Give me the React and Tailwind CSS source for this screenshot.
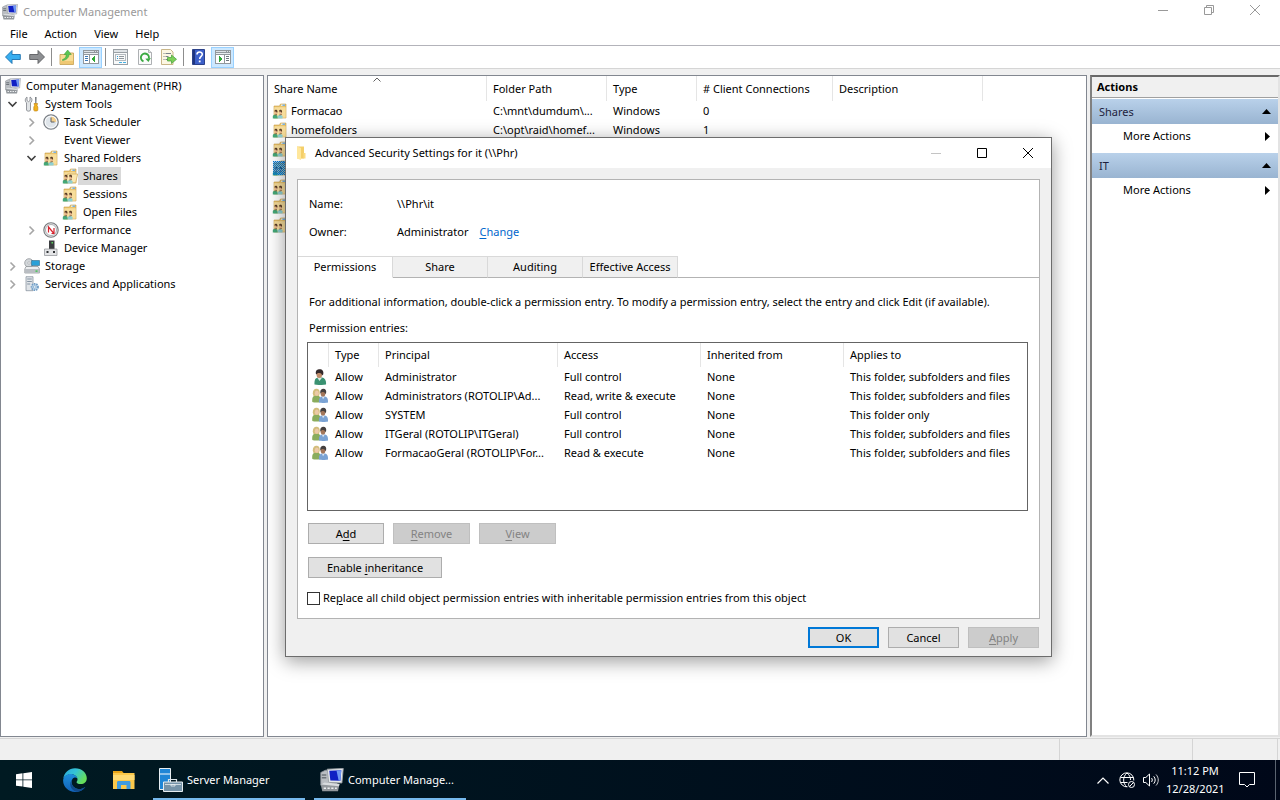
import React from 'react'

/* ---------- icons ---------- */

const ComputerIcon = ({ className = 'w-4 h-4' }) => (
  <svg className={className} viewBox="0 0 16 16">
    <path d="M.5 3l3-1.5h3V11l-4 1.5-2-1z" fill="#b9bdc2" stroke="#8a8f95" strokeWidth=".5" />
    <path d="M1.2 4.2h3v1h-3zM1.2 6h3v1h-3z" fill="#6e747b" />
    <path d="M4.8.8L15.5.3 14.6 10l-8.8-.4z" fill="#e4e7ea" stroke="#9ba0a6" strokeWidth=".6" />
    <path d="M6.2 1.9l8-.4-.6 7-6.7-.2z" fill="#1020c4" />
    <path d="M11 1.7l3.2-.2-.6 7-1.2-.1z" fill="#6f97f2" />
    <path d="M8.5 9.8h3V11h-3z" fill="#9aa0a6" />
    <path d="M.5 11L3 9.5l10 1.2-1 4.8H1.5z" fill="#92979c" />
    <path d="M.5 11L3 9.5l10 1.2-.4 1.5z" fill="#d8dbde" />
    <path d="M2.5 13H4v1H2.500zM5 13h1.500v1H5zM7.500 13H9v1H7.500zM10 13h1.200v1H10z" fill="#eceef0" />
  </svg>
)

const ToolsIcon = () => (
  <svg className="w-4 h-4" viewBox="0 0 16 16">
    <path d="M3 1v3.5l1.500 1.200L6 4.500V1c1.800 1 2.300 2.400 1.800 4-.3.9-.8 1.400-1.300 1.800V14c0 1.600-4 1.600-4 0V6.800C.8 5.800.8 2.500 3 1z" fill="#e1e4e6" stroke="#7d8288" strokeWidth=".8" />
    <path d="M11 1h1.600l-.2 6.500h-1.200z" fill="#7a7f84" />
    <path d="M10 7.500h3.600l-.6 2 .8 1.500v3.300c0 1-4 1-4 0V11l.8-1.500z" fill="#f2b21c" stroke="#b97a08" strokeWidth=".6" />
  </svg>
)

const ClockIcon = () => (
  <svg className="w-4 h-4" viewBox="0 0 16 16">
    <circle cx="8" cy="8" r="7.2" fill="#dfe5ea" stroke="#7c8187" strokeWidth="1.3" />
    <path d="M8 8V2.200a5.800 5.800 0 0 1 5.800 5.800z" fill="#f3cf8d" />
    <circle cx="8" cy="8" r="5.9" fill="none" stroke="#fff" strokeWidth=".9" />
    <path d="M8 3.500V8h3.500" fill="none" stroke="#5d6268" strokeWidth="1" />
  </svg>
)

const SharedFolderIcon = ({ open = false, selected = false }) => (
  <svg className="w-4 h-4 shrink-0" viewBox="0 0 16 16">
    <path d="M2 3h5.500l1-2H14v14H2z" fill="#e9c36c" stroke="#c9a04a" strokeWidth=".6" />
    <path d="M9 1.600h4v1.200H9z" fill="#eaf4fb" />
    <path d="M10.500 1.600H13v1.200h-2.500z" fill="#5aa4e6" />
    <path d="M2.300 4.200h11.400v10.500H2.300z" fill="#f7dd9b" />
    {open && <path d="M5.500 6h10.200l-2 8.700H4z" fill="#fbe7b0" stroke="#c9a04a" strokeWidth=".6" />}
    <path d="M.8 13c.8-1.800 3.700-1.800 4.700 0l.3 2.500H.8z" fill="#43a878" />
    <path d="M5.800 13.300c.8-1.600 3.700-1.600 4.700 0v2.200H5.800z" fill="#8fcfd0" />
    <ellipse cx="4" cy="9.500" rx="1.500" ry="2.100" fill="#e6b68c" />
    <ellipse cx="8.600" cy="9.500" rx="1.500" ry="2.100" fill="#e6b68c" />
    <path d="M2.300 8.500C2.500 6.300 5.500 6.300 5.500 8.500L5 10c-.3-1.100-1-1.500-2.700-1.500zM6.900 8.500c.2-2.200 3.200-2.200 3.200 0L9.600 10c-.3-1.100-1-1.500-2.700-1.500z" fill="#5a3d26" />
    <path d="M2.500 12l2.500-.5M7.300 12l2.500-.5" stroke="#7d5432" strokeWidth=".8" />
    {selected && (
      <>
        <defs>
          <pattern id="dither" width="2" height="2" patternUnits="userSpaceOnUse">
            <path d="M0 0h1v1H0zM1 1h1v1H1z" fill="#0078d7" />
          </pattern>
        </defs>
        <path d="M1 1h15v14H1z" fill="#0078d7" opacity=".3" />
        <path d="M1 1h15v14H1z" fill="url(#dither)" />
      </>
    )}
  </svg>
)

const PerformanceIcon = () => (
  <svg className="w-4 h-4" viewBox="0 0 16 16">
    <circle cx="8" cy="8" r="7.2" fill="#e9eaeb" stroke="#77797c" strokeWidth="1.1" />
    <circle cx="8" cy="8" r="5.5" fill="#fff" stroke="#8e9195" strokeWidth=".7" />
    <path d="M5.500 10.500V5l5 6M11 6v5.500H8.500" fill="none" stroke="#d6202b" strokeWidth="1.2" />
  </svg>
)

const DeviceIcon = () => (
  <svg className="w-4 h-4" viewBox="0 0 16 16">
    <path d="M6 .5h5.500V9H6z" fill="#3b3d40" />
    <path d="M8.500 2H10v1.500H8.500z" fill="#59d35b" />
    <path d="M1.500 9H14v6.500H1.500z" fill="#e3e4e6" stroke="#8c8f93" strokeWidth=".7" />
    <path d="M3.500 11h2v2h-2zM10 11h2v2h-2z" fill="#2f3134" />
  </svg>
)

const StorageIcon = () => (
  <svg className="w-4 h-4" viewBox="0 0 16 16">
    <circle cx="5" cy="5" r="4.3" fill="#d3d7da" stroke="#868b90" strokeWidth=".7" />
    <circle cx="5" cy="5" r="1.2" fill="#fff" stroke="#868b90" strokeWidth=".5" />
    <path d="M7.500 2.500h8v5h-8z" fill="#2aa0d8" stroke="#33698a" strokeWidth=".6" />
    <path d="M2 8.500h12l1.500 2.500v4H.8v-4z" fill="#eceef0" stroke="#85898e" strokeWidth=".7" />
    <path d="M1 11h14.500v4H1z" fill="#b9bdc2" />
    <path d="M11.500 12.500h2v1.200h-2z" fill="#2bc93a" />
  </svg>
)

const ServicesIcon = () => (
  <svg className="w-4 h-4" viewBox="0 0 16 16">
    <path d="M2 .7h7v14H2z" fill="#e0e4e8" stroke="#7f8b96" strokeWidth=".7" />
    <path d="M3.200 3h4.600M3.200 5.500h4.600M3.200 8h3" stroke="#8493a2" strokeWidth="1" />
    <circle cx="10.8" cy="11" r="3.2" fill="#c4dbee" stroke="#6f9cc4" strokeWidth="1.8" strokeDasharray="1.5 .8" />
    <circle cx="10.8" cy="11" r="1.3" fill="#fff" stroke="#6f9cc4" strokeWidth=".7" />
  </svg>
)

const UserIcon = () => (
  <svg className="w-4 h-4" viewBox="0 0 16 16">
    <path d="M2.500 15.500c-.3-4 .5-6.300 3-6.700l4.500-.3c2.800.4 4.500 3 4 7-3 .7-8.500.7-11.500 0z" fill="#3a9272" />
    <path d="M5.500 9l2 3 2.500-3.300z" fill="#d9ebe3" />
    <ellipse cx="7.3" cy="5.5" rx="2.8" ry="3.6" fill="#c08d6b" />
    <path d="M3.800 4.500C3.500 1 5.500.2 7.500.2c3 0 4.500 2 3.700 5.300L10 6.500c0-1.500-1-2.500-2.500-2.500-1.700-.2-2.700.5-3 1.500z" fill="#33292a" />
  </svg>
)

const GroupIcon = () => (
  <svg className="w-4 h-4" viewBox="0 0 16 16">
    <path d="M.3 14C0 9.500 1 8 3.200 7.800h3C8 8 8.800 10 8.300 14c-2 .7-6 .7-8 0z" fill="#8aac5c" />
    <path d="M.8 5.500C.6 2.500 2.300.8 4.300.8S8 2 7.700 5.500L7 8H1.500z" fill="#d3bd7c" />
    <ellipse cx="4.8" cy="5.2" rx="2" ry="2.6" fill="#eccaa8" />
    <path d="M7 14.500c-.5-4 .8-5.700 3-5.900h2.500c2.300.2 3.800 1.900 3.500 5.900-2 .6-7 .6-9 0z" fill="#7ba3d4" />
    <path d="M10 8.700l1 2.500 1.700-2.500z" fill="#dce8f5" />
    <ellipse cx="11" cy="5.500" rx="2.4" ry="3.1" fill="#a3765a" />
    <path d="M8.200 4.500C8.200 2 9.500.8 11.300.8c2.300 0 3.400 1.700 2.800 4.400l-1 .8c0-1.200-.8-2-2-2s-2 .3-2.200 1.500z" fill="#45403f" />
  </svg>
)

const ArrowIcon = ({ forward = false }) => (
  <svg className="w-4 h-4" viewBox="0 0 16 16">
    {forward ? (
      <path d="M15.500 8L9 1.500v4H.7v5H9v4z" fill="#8d8f92" stroke="#5c5e61" strokeWidth=".9" />
    ) : (
      <path d="M.5 8L7 1.500v4h8.300v5H7v4z" fill="#37aef0" stroke="#1b6fae" strokeWidth=".9" />
    )}
  </svg>
)

const UpFolderIcon = () => (
  <svg className="w-4 h-4" viewBox="0 0 16 16">
    <path d="M1 5.500h8.500l1-1.500h4v11.500H1z" fill="#f8dc94" stroke="#c59d4b" strokeWidth=".8" />
    <path d="M1.500 12h12.600v3H1.500z" fill="#efc873" />
    <path d="M3.500 10.500c2.700-1 3.700-2.500 3.700-5H5L8.700 1l3.600 4.500H10c0 3-2.500 5.500-6.500 6z" fill="#5cc552" stroke="#3a9936" strokeWidth=".5" />
  </svg>
)

const PaneIcon = ({ right = false }) => (
  <svg className="w-4 h-4" viewBox="0 0 16 16" shapeRendering="crispEdges">
    <path d="M0 1h16v14H0z" fill="#92989d" />
    <path d="M1 2h10v1H1zM12 2h1v1h-1zM14 2h1v1h-1z" fill="#dde2e6" />
    <path d="M1 4h14v1H1z" fill="#e9edf0" />
    {right ? (
      <>
        <path d="M1 6h8v8H1zM10 6h5v8h-5z" fill="#fff" />
        <path d="M4 7l4 3-4 3z" fill="#2fa836" />
        <path d="M11 7h3v1h-3zM11 9h3v1h-3zM11 11h3v1h-3z" fill="#6d7780" />
      </>
    ) : (
      <>
        <path d="M1 6h5v8H1zM7 6h8v8H7z" fill="#fff" />
        <path d="M12 7l-4 3 4 3z" fill="#2fa836" />
        <path d="M2 7h3v1H2zM2 9h3v1H2zM2 11h3v1H2z" fill="#3d78b5" />
      </>
    )}
  </svg>
)

const PropertiesIcon = () => (
  <svg className="w-4 h-4" viewBox="0 0 16 16" shapeRendering="crispEdges">
    <path d="M0 0h15v16H0z" fill="#9aa0a5" />
    <path d="M1 1h13v2H1z" fill="#dfe3e6" />
    <path d="M1 4h13v11H1z" fill="#f9fafa" />
    <path d="M2 5h11v7H2z" fill="#b4babf" />
    <path d="M3 6h9v5H3z" fill="#f9fafa" />
    <path d="M4 7h1v1H4zM4 9h1v1H4z" fill="#2f9bd8" />
    <path d="M6 7h5v1H6zM6 9h5v1H6z" fill="#8f969c" />
    <path d="M6 13h3v1H6zM10 13h3v1h-3z" fill="#45b0e2" />
  </svg>
)

const RefreshIcon = () => (
  <svg className="w-4 h-4" viewBox="0 0 16 16">
    <path d="M1.500.5h10l3 3v12h-13z" fill="#fbfbfb" stroke="#a4a7aa" strokeWidth=".9" />
    <path d="M11.500.5v3h3" fill="#e1e3e5" stroke="#a4a7aa" strokeWidth=".8" />
    <path d="M6.500 12.300A4 4 0 1 1 11.800 9.500" fill="none" stroke="#3aa941" strokeWidth="1.9" />
    <path d="M13.800 9l-2.300 4-3.200-3.200z" fill="#3aa941" />
  </svg>
)

const ExportIcon = () => (
  <svg className="w-4 h-4" viewBox="0 0 16 16">
    <path d="M.5.5h9L12 3v12.500H.5z" fill="#fdf7e3" stroke="#c3ae7c" strokeWidth=".9" />
    <path d="M2.500 4.500h1M4.500 4.500H10M2.500 7.500h1M4.500 7.500h3M2.500 10.500h1M4.500 10.500h3" stroke="#7a828a" strokeWidth="1" />
    <path d="M6.500 8.500h4V6l5 4.300-5 4.200V12h-4z" fill="#7dcf58" stroke="#3f9f38" strokeWidth=".7" />
  </svg>
)

const HelpIcon = () => (
  <svg className="w-4 h-4" viewBox="0 0 16 16">
    <path d="M1.500.5h12v15h-12z" fill="#3c5fc8" stroke="#1f357f" strokeWidth=".9" />
    <path d="M2 1h2v14H2z" fill="#1f357f" />
    <path d="M6 5.500C6 2.300 11.300 2.300 11.300 5.300c0 2-2.600 2.200-2.600 4.700" fill="none" stroke="#fff" strokeWidth="1.6" />
    <path d="M7.800 11.500h1.800v1.800H7.800z" fill="#fff" />
  </svg>
)

const Chevron = ({ open }) => (
  <svg className="w-3 h-3" viewBox="0 0 12 12" fill="none">
    {open ? (
      <path d="M1.500 4l4 4 4-4" stroke="#404040" strokeWidth="1.6" />
    ) : (
      <path d="M3.500 2.500l4 4-4 4" stroke="#a6a6a6" strokeWidth="1.6" />
    )}
  </svg>
)

const glyphs = {
  minimize: 'M0 5.5h10',
  maximize: 'M.5.5h9v9h-9z',
  restore: 'M.5 2.5h7v7h-7zM2.5 2.5v-2h7v7h-2',
  close: 'M0 0l10 10M10 0L0 10',
}

const CaptionButton = ({ type, className = '' }) => (
  <button aria-label={type} className={`w-[46px] h-full flex items-center justify-center ${className}`}>
    <svg className="w-[10px] h-[10px]" viewBox="0 0 10 10" fill="none" stroke="currentColor">
      <path d={glyphs[type]} />
    </svg>
  </button>
)

/* ---------- data ---------- */

const tree = [
  { label: 'Computer Management (PHR)', icon: <ComputerIcon />, root: true },
  { label: 'System Tools', icon: <ToolsIcon />, indent: 'pl-[6px]', open: true },
  { label: 'Task Scheduler', icon: <ClockIcon />, indent: 'pl-[25px]', open: false },
  { label: 'Event Viewer', icon: null, indent: 'pl-[25px]', open: false },
  { label: 'Shared Folders', icon: <SharedFolderIcon />, indent: 'pl-[25px]', open: true },
  { label: 'Shares', icon: <SharedFolderIcon open />, indent: 'pl-[44px]', selected: true },
  { label: 'Sessions', icon: <SharedFolderIcon />, indent: 'pl-[44px]' },
  { label: 'Open Files', icon: <SharedFolderIcon />, indent: 'pl-[44px]' },
  { label: 'Performance', icon: <PerformanceIcon />, indent: 'pl-[25px]', open: false },
  { label: 'Device Manager', icon: <DeviceIcon />, indent: 'pl-[25px]' },
  { label: 'Storage', icon: <StorageIcon />, indent: 'pl-[6px]', open: false },
  { label: 'Services and Applications', icon: <ServicesIcon />, indent: 'pl-[6px]', open: false },
]

const shares = [
  { name: 'Formacao', path: 'C:\\mnt\\dumdum\\...', type: 'Windows', clients: 0 },
  { name: 'homefolders', path: 'C:\\opt\\raid\\homef...', type: 'Windows', clients: 1 },
  {}, { selected: true }, {}, {}, {},
]

const entries = [
  { user: true, principal: 'Administrator', access: 'Full control', applies: 'This folder, subfolders and files' },
  { principal: 'Administrators (ROTOLIP\\Ad...', access: 'Read, write & execute', applies: 'This folder, subfolders and files' },
  { principal: 'SYSTEM', access: 'Full control', applies: 'This folder only' },
  { principal: 'ITGeral (ROTOLIP\\ITGeral)', access: 'Full control', applies: 'This folder, subfolders and files' },
  { principal: 'FormacaoGeral (ROTOLIP\\For...', access: 'Read & execute', applies: 'This folder, subfolders and files' },
]

/* ---------- main window ---------- */

const ToolButton = ({ label, active, children }) => (
  <button
    aria-label={label}
    className={`w-[23px] h-[21px] flex items-center justify-center ${
      active ? 'bg-[#cce8ff] border border-[#99d1ff]' : ''
    }`}
  >
    {children}
  </button>
)

const Separator = () => <div className="w-px h-[18px] mx-[2px] bg-[#8d8d8d]" />

function Toolbar() {
  return (
    <div className="h-[23px] pl-px flex items-center gap-px border-b border-[#d5d5d5]">
      <ToolButton label="Back"><ArrowIcon /></ToolButton>
      <ToolButton label="Forward"><ArrowIcon forward /></ToolButton>
      <Separator />
      <ToolButton label="Up"><UpFolderIcon /></ToolButton>
      <ToolButton label="Console tree" active><PaneIcon /></ToolButton>
      <Separator />
      <ToolButton label="Properties"><PropertiesIcon /></ToolButton>
      <ToolButton label="Refresh"><RefreshIcon /></ToolButton>
      <ToolButton label="Export list"><ExportIcon /></ToolButton>
      <Separator />
      <ToolButton label="Help"><HelpIcon /></ToolButton>
      <ToolButton label="Action pane" active><PaneIcon right /></ToolButton>
    </div>
  )
}

function Tree() {
  return (
    <ul className="w-[264px] shrink-0 bg-white border border-[#828790] pt-px">
      {tree.map(({ label, icon, indent, open, root, selected }) => (
        <li key={label} className={`h-[18px] flex items-center ${root ? 'pl-1' : indent}`}>
          {!root && (
            <span className="w-[17px] shrink-0">
              {open !== undefined && <Chevron open={open} />}
            </span>
          )}
          <span className="w-4 h-4 shrink-0">{icon}</span>
          <span className={`h-[18px] leading-[17px] pl-[5px] pr-[3px] ${selected ? 'bg-[#d9d9d9]' : ''}`}>
            {label}
          </span>
        </li>
      ))}
    </ul>
  )
}

const headCell = 'p-0 pl-[6px] font-normal text-left border-r border-[#e5e5e5]'

function ShareList() {
  return (
    <div className="flex-1 min-w-0 bg-white border border-[#828790]">
      <table className="w-full table-fixed border-separate border-spacing-0">
        <colgroup>
          <col className="w-[219px]" />
          <col className="w-[120px]" />
          <col className="w-[90px]" />
          <col className="w-[136px]" />
          <col className="w-[150px]" />
          <col />
        </colgroup>
        <thead>
          <tr className="h-[25px]">
            <th className={`${headCell} relative`}>
              Share Name
              <svg className="absolute top-px left-1/2 -translate-x-1/2 w-2 h-[5px]" viewBox="0 0 8 5" fill="none" stroke="#606060">
                <path d="M.5 4.500L4 1l3.500 3.500" />
              </svg>
            </th>
            <th className={headCell}>Folder Path</th>
            <th className={headCell}>Type</th>
            <th className={headCell}># Client Connections</th>
            <th className={headCell}>Description</th>
            <th />
          </tr>
        </thead>
        <tbody>
          {shares.map((s, i) => (
            <tr key={i} className="h-[19px]">
              <td className="p-0 pl-1">
                <div className="flex items-center gap-[3px]">
                  <SharedFolderIcon selected={s.selected} />
                  {s.name}
                </div>
              </td>
              <td className="p-0 pl-[6px] whitespace-nowrap">{s.path}</td>
              <td className="p-0 pl-[6px]">{s.type}</td>
              <td className="p-0 pl-[6px]">{s.clients}</td>
              <td />
              <td />
            </tr>
          ))}
        </tbody>
      </table>
    </div>
  )
}

const ActionGroup = ({ title }) => (
  <section className="mb-[5px]">
    <button className="w-full h-[25px] pl-[7px] pr-[7px] flex items-center justify-between bg-gradient-to-b from-[#b9d1ea] to-[#99b4d1] text-[#1e1e3c]">
      {title}
      <svg className="w-[9px] h-[5px]" viewBox="0 0 9 5"><path d="M0 5L4.500 0 9 5z" fill="#000" /></svg>
    </button>
    <button className="w-full h-6 pl-[31px] pr-2 flex items-center justify-between">
      More Actions
      <svg className="w-[5px] h-[9px]" viewBox="0 0 5 9"><path d="M0 0l5 4.500L0 9z" fill="#000" /></svg>
    </button>
  </section>
)

function ActionsPane() {
  return (
    <aside className="w-[190px] shrink-0 bg-white border-2 border-t-[#696969] border-l-[#808080] border-r-[#e3e3e3] border-b-[#e3e3e3]">
      <h2 className="h-[21px] mb-px pl-[5px] flex items-center font-bold bg-[#f0f0f0] border-b border-[#a0a0a0]">Actions</h2>
      <ActionGroup title="Shares" />
      <ActionGroup title="IT" />
    </aside>
  )
}

/* ---------- dialog ---------- */

const DialogButton = ({ children, className = '', disabled, primary }) => (
  <button
    disabled={disabled}
    className={`h-[21px] flex items-center justify-center ${
      disabled
        ? 'bg-[#cccccc] border border-[#bfbfbf] text-[#838383]'
        : primary
          ? 'bg-[#e1e1e1] border-2 border-[#0078d7]'
          : 'bg-[#e1e1e1] border border-[#adadad]'
    } ${className}`}
  >
    <span>{children}</span>
  </button>
)

const Key = ({ children }) => <span className="underline underline-offset-2">{children}</span>

function SecurityDialog() {
  return (
    <div
      role="dialog"
      className="absolute left-[285px] top-[137px] w-[767px] bg-[#f0f0f0] border border-[#6d6d6d] shadow-[0_4px_18px_rgba(0,0,0,0.4)]"
    >
      <div className="h-[30px] pl-[10px] flex items-center bg-white">
        <svg className="w-3 h-4 mr-[7px]" viewBox="0 0 12 16">
          <path d="M1 1.500h7v12H1z" fill="#f4cf6a" />
          <path d="M1 1.500L5 3v12l-4-1.500z" fill="#ffe79c" />
          <path d="M7.500 8h2v5.500H5V13h2.500z" fill="#fbdc83" />
        </svg>
        <span className="flex-1">Advanced Security Settings for it (\\Phr)</span>
        <CaptionButton type="minimize" className="text-[#c4c4c4]" />
        <CaptionButton type="maximize" />
        <CaptionButton type="close" />
      </div>

      <div className="mx-[11px] mt-[11px] pt-[14px] bg-white border border-[#b3b3b3]">
        <dl className="px-[11px] grid grid-cols-[88px_1fr] gap-y-2 leading-5">
          <dt>Name:</dt>
          <dd>\\Phr\it</dd>
          <dt>Owner:</dt>
          <dd>
            Administrator
            <a href="#change" className="ml-[11px] text-[#0066cc]"><Key>C</Key>hange</a>
          </dd>
        </dl>

        <div role="tablist" className="mt-[14px] flex">
          <button role="tab" aria-selected="true" className="w-[95px] h-[22px] border-y border-r border-[#d9d9d9] border-b-white bg-white">Permissions</button>
          {['Share', 'Auditing', 'Effective Access'].map((tab) => (
            <button key={tab} role="tab" className="min-w-[95px] h-[22px] px-[5px] whitespace-nowrap bg-[#f0f0f0] border-t border-r border-t-[#d9d9d9] border-r-[#d9d9d9] border-b border-b-[#b3b3b3]">
              {tab}
            </button>
          ))}
          <div className="flex-1 border-b border-[#b3b3b3]" />
        </div>

        <div className="pt-[14px] pl-[9px] pr-[11px] pb-[13px]">
          <p className="pl-[2px] leading-5 whitespace-nowrap">
            For additional information, double-click a permission entry. To modify a permission entry, select the entry and click Edit (if available).
          </p>
          <p className="pl-[2px] mt-[6px] leading-5">Permission entries:</p>

          <div className="mt-1 h-[169px] border border-[#646464]">
            <table className="w-full table-fixed border-separate border-spacing-0">
              <colgroup>
                <col className="w-[21px]" />
                <col className="w-[50px]" />
                <col className="w-[179px]" />
                <col className="w-[143px]" />
                <col className="w-[143px]" />
                <col />
              </colgroup>
              <thead>
                <tr className="h-6">
                  <th className={headCell} />
                  <th className={headCell}>Type</th>
                  <th className={headCell}>Principal</th>
                  <th className={headCell}>Access</th>
                  <th className={headCell}>Inherited from</th>
                  <th className="p-0 pl-[6px] font-normal text-left">Applies to</th>
                </tr>
              </thead>
              <tbody>
                {entries.map((e) => (
                  <tr key={e.principal} className="h-[19px] whitespace-nowrap">
                    <td className="p-0 pl-1">{e.user ? <UserIcon /> : <GroupIcon />}</td>
                    <td className="p-0 pl-[6px]">Allow</td>
                    <td className="p-0 pl-[6px]">{e.principal}</td>
                    <td className="p-0 pl-[6px]">{e.access}</td>
                    <td className="p-0 pl-[6px]">None</td>
                    <td className="p-0 pl-[6px]">{e.applies}</td>
                  </tr>
                ))}
              </tbody>
            </table>
          </div>

          <div className="mt-3 pl-px flex gap-[9px]">
            <DialogButton className="w-[76px]">A<Key>d</Key>d</DialogButton>
            <DialogButton className="w-[77px]" disabled><Key>R</Key>emove</DialogButton>
            <DialogButton className="w-[77px]" disabled><Key>V</Key>iew</DialogButton>
          </div>
          <div className="mt-[13px] pl-px">
            <DialogButton className="w-[134px]">Enable <Key>i</Key>nheritance</DialogButton>
          </div>
          <div className="mt-[13px] h-[14px] flex items-center gap-[3px]">
            <input id="replace" type="checkbox" className="appearance-none w-[13px] h-[13px] bg-white border border-[#333]" />
            <label htmlFor="replace">
              Re<Key>p</Key>lace all child object permission entries with inheritable permission entries from this object
            </label>
          </div>
        </div>
      </div>

      <div className="px-3 py-2 flex justify-end gap-[9px]">
        <DialogButton className="w-[71px]" primary>OK</DialogButton>
        <DialogButton className="w-[71px]">Cancel</DialogButton>
        <DialogButton className="w-[71px]" disabled><Key>A</Key>pply</DialogButton>
      </div>
    </div>
  )
}

/* ---------- taskbar ---------- */

const EdgeIcon = () => (
  <svg className="w-6 h-6" viewBox="0 0 24 24">
    <defs>
      <linearGradient id="edgeTop" x1="0" x2="1" y1="0" y2=".5">
        <stop offset="0" stopColor="#2aa6dc" />
        <stop offset=".5" stopColor="#34c3d6" />
        <stop offset="1" stopColor="#66dd5a" />
      </linearGradient>
      <linearGradient id="edgeBody" x1="0" x2="0" y1="0" y2="1">
        <stop offset="0" stopColor="#1d8fdc" />
        <stop offset="1" stopColor="#1262b8" />
      </linearGradient>
    </defs>
    <path d="M.3 10.500C1 4.500 6 .2 12 .2c7 0 11.800 4.800 11.800 10 0 3.600-2.700 5.900-6 5.900-2.800 0-4.300-1-4.300-1.800 0-.6 1-1 1-3 0-2.300-2.500-5-6.200-5-4 0-6.800 1.700-8 4.200z" fill="url(#edgeTop)" />
    <path d="M.2 11.500c.6-3.400 3.700-5.600 7.300-5.600 3 0 6.300 1.600 7 4.600-1-.8-2.400-1.200-3.400-.7C7.500 11 7.400 19 14 20.800c3 .8 6-.3 8.300-1.900-2 3.100-5.800 5-10.300 5C5 23.900-.6 18.200.2 11.500z" fill="url(#edgeBody)" />
    <path d="M9.700 11c-2.600 3-1.200 8.300 4.300 9.800 3 .8 6-.3 8.300-1.900-1.500 2.400-4.500 4.600-8.600 4.600-6.200-.6-8.700-8.500-4-12.500z" fill="#114a8b" />
  </svg>
)

const ExplorerIcon = () => (
  <svg className="w-6 h-6" viewBox="0 0 24 24">
    <path d="M1 3h9l2 2.500H1z" fill="#e8a317" />
    <path d="M1 5h21.500v16H1z" fill="#fbc84a" />
    <path d="M1 7h21.500v5H1z" fill="#ffda73" />
    <path d="M5 21v-6.500c0-1 .6-1.500 1.500-1.500H17c1 0 1.500.5 1.500 1.500V21h-4v-4H9v4z" fill="#3f9be0" />
  </svg>
)

const ServerIcon = () => (
  <svg className="w-6 h-6" viewBox="0 0 24 24">
    <path d="M.5.5h11v21H.5z" fill="#1f86d6" stroke="#fff" strokeWidth=".9" />
    <path d="M.5 6h11" stroke="#fff" strokeWidth="1" />
    <path d="M9.500 14v-2.500h8V14" fill="none" stroke="#dce5ea" strokeWidth="1.2" />
    <path d="M4.500 14h19v9.500h-19z" fill="#7593a8" stroke="#e6edf1" strokeWidth="1" />
    <path d="M6 16.500h16M12 16.500h4v1.500h-4z" fill="none" stroke="#e6edf1" strokeWidth=".8" />
  </svg>
)

const Task = ({ icon, label }) => (
  <button className="w-[152px] h-full pl-[6px] pt-[2px] flex items-center gap-1 border-b-2 border-[#76b9ed]">
    {icon}
    {label}
  </button>
)

function Taskbar() {
  return (
    <footer className="h-10 flex items-center text-white bg-gradient-to-r from-[#001a22] to-[#000819]">
      <button aria-label="Start" className="w-12 h-full flex items-center justify-center">
        <svg className="w-4 h-4" viewBox="0 0 16 16" fill="#fff">
          <path d="M0 2.200l6.500-.9v6.200H0zM7.300 1.200L16 0v7.500H7.300zM0 8.300h6.500v6.300L0 13.700zM7.300 8.300H16V16l-8.700-1.200z" />
        </svg>
      </button>
      <button aria-label="Edge" className="w-[53px] h-full flex items-center justify-center"><EdgeIcon /></button>
      <button aria-label="File Explorer" className="w-[46px] h-full flex items-center justify-center"><ExplorerIcon /></button>
      <div className="ml-[6px] h-full flex gap-[9px]">
        <Task icon={<ServerIcon />} label="Server Manager" />
        <Task icon={<ComputerIcon className="w-6 h-6" />} label="Computer Manage..." />
      </div>

      <div className="ml-auto h-full flex items-center">
        <svg className="w-3 h-[7px] mr-[10px]" viewBox="0 0 12 7" fill="none" stroke="#fff" strokeWidth="1.2">
          <path d="M.5 6.500L6 1l5.500 5.500" />
        </svg>
        <svg className="w-4 h-4 mr-2" viewBox="0 0 16 16" fill="none" stroke="#fff">
          <path d="M8.500 14.800A7 7 0 1 1 14.800 8.500M8 1C3.500 4.500 3.500 11.500 8 15M8 1c2.600 2 3.600 4.500 3.500 7M1.500 5.500h13M1.500 10.500h7" />
          <circle cx="12.5" cy="12.5" r="3" />
          <path d="M10.500 14.500l4-4" />
        </svg>
        <svg className="w-4 h-4 mr-[7px]" viewBox="0 0 16 16" fill="none" stroke="#fff">
          <path d="M.5 5.500h2.300L6.500 2v12l-3.700-3.500H.5zM8.500 6c1 1.200 1 2.800 0 4M10.700 4.300c2 2.200 2 5.200 0 7.400" />
          <path d="M13 2.500c3 3.200 3 7.800 0 11" strokeWidth=".8" />
        </svg>
        <div className="w-[58px] text-center leading-[18px] whitespace-nowrap">
          <div>11:12 PM</div>
          <div>12/28/2021</div>
        </div>
        <button aria-label="Notifications" className="w-[46px] h-full flex items-center justify-center">
          <svg className="w-4 h-4" viewBox="0 0 16 16" fill="none" stroke="#fff">
            <path d="M.5.5h15v12h-5L8 15l-2.500-2.500h-5z" />
          </svg>
        </button>
        <div className="ml-[5px] w-[5px] h-full border-l border-[#5a6470]" />
      </div>
    </footer>
  )
}

export default function App() {
  return (
    <div className="relative min-h-screen flex flex-col bg-[#f0f0f0] text-black text-[11px] leading-4 font-['Noto_Sans',sans-serif]">
      <header className="bg-white">
        <div className="h-6 pl-[2px] pr-[2px] flex items-center text-[#999]">
          <ComputerIcon />
          <h1 className="flex-1 pl-[5px]">Computer Management</h1>
          <div className="h-5 flex self-start">
            <CaptionButton type="minimize" />
            <CaptionButton type="restore" />
            <CaptionButton type="close" />
          </div>
        </div>
        <nav className="h-[22px] pl-[10px] pb-[2px] flex items-center gap-[17px] border-b border-[#b3b3ba]">
          <button>File</button>
          <button>Action</button>
          <button>View</button>
          <button>Help</button>
        </nav>
        <Toolbar />
      </header>

      <main className="flex-1 mt-[6px] mb-px flex gap-[3px]">
        <Tree />
        <ShareList />
        <ActionsPane />
      </main>

      <div className="h-[22px] flex border-t border-[#d5d5d5]">
        <div className="flex-1 border-r border-[#d5d5d5]" />
        <div className="w-[133px] border-r border-[#d5d5d5]" />
        <div className="w-[85px] mr-[2px] border-r border-[#d5d5d5]" />
      </div>

      <Taskbar />
      <SecurityDialog />
    </div>
  )
}
